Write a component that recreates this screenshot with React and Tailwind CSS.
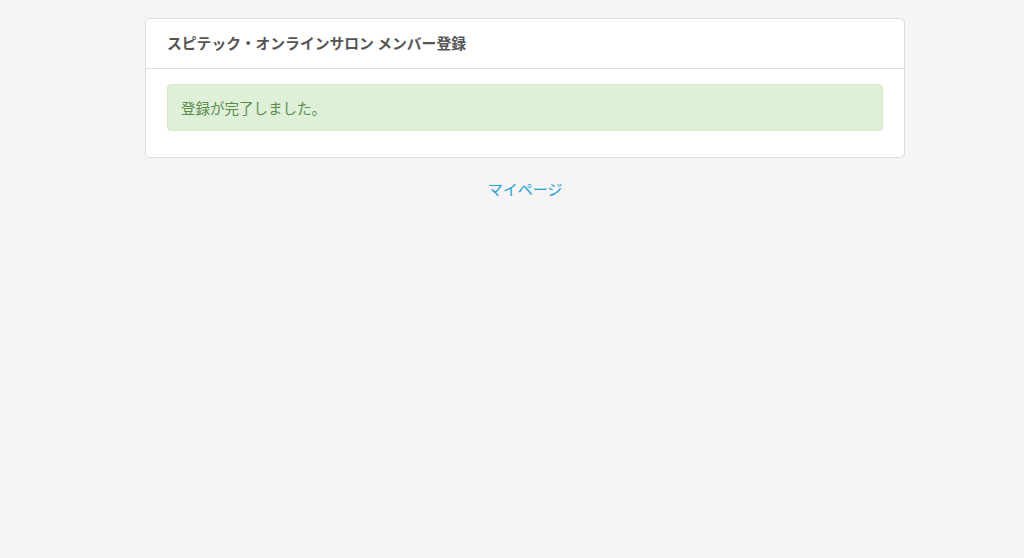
export default function App() {
  return (
    <div
      className="min-h-[558px] w-full bg-[#f5f5f5] pt-[18px]"
      style={{ fontFamily: '"Noto Sans CJK JP", "Noto Sans", sans-serif' }}
    >
      <div className="ml-[145px] w-[760px]">
        <div className="rounded-[5px] border border-[#dddddd] bg-white">
          <div className="flex h-[50px] items-center border-b border-[#dddddd] px-[21px]">
            <h1 className="text-[14.8px] font-bold text-[#555555]">
              スピテック・オンラインサロン メンバー登録
            </h1>
          </div>
          <div className="px-[21px] pt-[15px] pb-[26px]">
            <div className="flex h-[47px] items-center rounded-[4px] border border-[#d6e9c6] bg-[#dff0d8] px-[13px] text-[14.5px] text-[#5b8a4f]">
              登録が完了しました。
            </div>
          </div>
        </div>
        <div className="mt-[18px] text-center">
          <a href="#" className="text-[15px] text-[#2a9fd6]">
            マイページ
          </a>
        </div>
      </div>
    </div>
  );
}
